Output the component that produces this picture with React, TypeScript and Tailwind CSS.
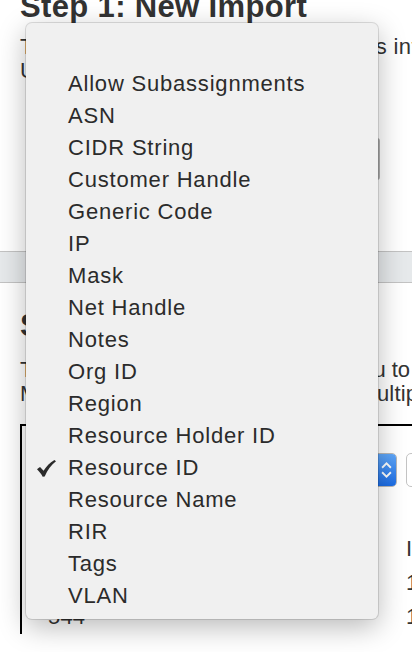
import React from "react";

const items = [
  "Allow Subassignments",
  "ASN",
  "CIDR String",
  "Customer Handle",
  "Generic Code",
  "IP",
  "Mask",
  "Net Handle",
  "Notes",
  "Org ID",
  "Region",
  "Resource Holder ID",
  "Resource ID",
  "Resource Name",
  "RIR",
  "Tags",
  "VLAN",
];

function Check() {
  return (
    <svg width="19" height="17" viewBox="0 0 18 16" aria-hidden="true">
      <path
        d="M0 8.8 C1 7.9 2 7.2 2.9 6.6 L6.2 10.2 C8.8 6 12 2.8 16.5 0 L18 1.2 C13.5 4.6 10 9.2 7.3 15.6 L5.4 15.8 C3.9 13.2 2.1 10.8 0 8.8 Z"
        fill="#2b2b2b"
      />
    </svg>
  );
}

export default function App() {
  return (
    <div className="relative h-[652px] w-[412px] overflow-hidden bg-white font-['Liberation_Sans',Arial,sans-serif] text-[#333]">
      <div className="px-5">
        <h1 className="-mt-[11px] whitespace-nowrap text-[31px] font-bold leading-[36px] tracking-[0.35px]">
          Step 1: New Import
        </h1>
        <div className="mt-[10px] whitespace-nowrap text-[22px] leading-[24px]">
          <p className="tracking-[0.38px]">This panel lets you import resources into the system.</p>
          <p className="tracking-[0.2px]">Upload a CSV file to get started.</p>
        </div>
        <div className="mt-[55px] flex">
          <div className="ml-auto mr-[12px] h-[42px] w-[300px] rounded-[3px] border-2 border-[#b0b0b0] bg-white" />
        </div>
      </div>

      <div className="mt-[71px] h-[32px] border-y border-[#c3c3c3] bg-[#e6e9eb]" />

      <div className="px-5">
        <h2 className="mt-[25px] whitespace-nowrap text-[31px] font-bold leading-[36px] tracking-[0.35px]">
          Step 2: Map Columns
        </h2>
        <div className="mt-[14px] whitespace-nowrap text-[22px] leading-[24px]">
          <p className="tracking-[0px]">The mapping table below permits you to choose fields.</p>
          <p className="tracking-[0.2px]">Map every column to a field, or to multiple fields.</p>
        </div>
      </div>

      <div className="ml-5 mt-[18px] border-l-2 border-t-2 border-black pl-[26px] pt-[27px] text-[22px] tracking-[0.2px]">
        <div className="flex gap-x-[9px]">
          <div className="flex h-[34px] w-[349px] shrink-0 overflow-hidden rounded-[5px] border border-[#b8b8b8] bg-white">
            <span className="flex-1 px-2 leading-[32px]">Resource ID</span>
            <div className="flex w-[20px] flex-col items-center justify-center gap-[2px] bg-linear-to-b from-[#5fa7f9] to-[#1a6ce6]">
              <svg width="11" height="8" viewBox="0 0 10 7">
                <path d="M1 6 L5 2 L9 6" fill="none" stroke="#fff" strokeWidth="1.7" />
              </svg>
              <svg width="11" height="8" viewBox="0 0 10 7">
                <path d="M1 1 L5 5 L9 1" fill="none" stroke="#fff" strokeWidth="1.7" />
              </svg>
            </div>
          </div>
          <div className="h-[34px] w-[120px] shrink-0 rounded-[5px] border border-[#c4c4c4] bg-white" />
        </div>

        <div className="mt-[45px] grid grid-cols-[349px_200px] gap-x-[9px] leading-[34px] whitespace-nowrap">
          <div>Resource ID</div>
          <div>IP</div>
          <div>543</div>
          <div>10.0.0.0/24</div>
          <div>544</div>
          <div>10.0.1.0/24</div>
        </div>
      </div>

      <div className="absolute left-[26px] top-[23px] w-[352px] rounded-[6px] bg-[#f0f0f0] pb-[7px] pt-[13px] text-[22px] tracking-[0.8px] text-[#2b2b2b] shadow-[0_8px_28px_rgba(0,0,0,0.28),0_0_0_1px_rgba(0,0,0,0.12)]">
        <div className="h-[32px]" />
        {items.map((it) => (
          <div key={it} className="flex h-[32px] items-center pl-[11px] leading-[32px] whitespace-nowrap">
            <span className="flex w-[31px] items-center">{it === "Resource ID" ? <Check /> : null}</span>
            <span>{it}</span>
          </div>
        ))}
      </div>
    </div>
  );
}
